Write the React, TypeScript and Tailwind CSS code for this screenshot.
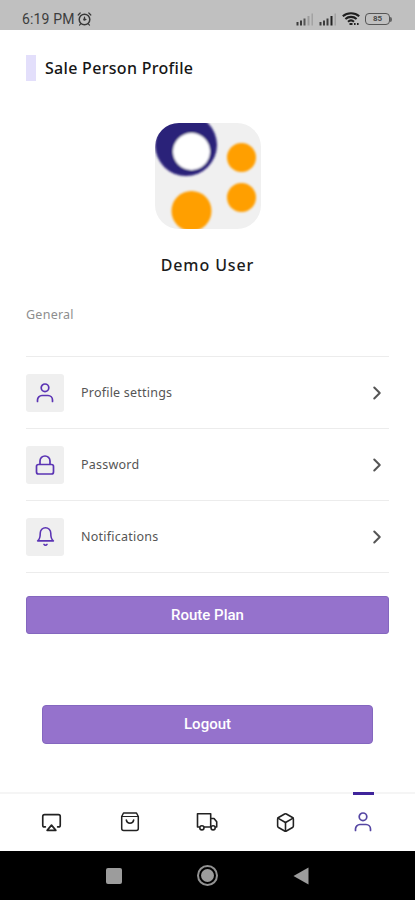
import { FiAirplay, FiBell, FiBox, FiChevronRight } from "react-icons/fi";

type IconProps = { className?: string };

function UserIcon({ className }: IconProps) {
  return (
    <svg width="22" height="22" viewBox="0 0 22 22" fill="none" stroke="currentColor" strokeWidth="1.7" strokeLinecap="round" className={className}>
      <circle cx="11" cy="5.800" r="3.800" />
      <path d="M3.500 19.500v-1.500a4.500 4.500 0 0 1 4.500-4.500h6a4.500 4.500 0 0 1 4.500 4.500v1.500" />
    </svg>
  );
}

function LockIcon({ className }: IconProps) {
  return (
    <svg width="22" height="22" viewBox="0 0 22 22" fill="none" stroke="currentColor" strokeWidth="1.7" className={className}>
      <rect x="2.500" y="10.500" width="17" height="9.500" rx="2" />
      <path d="M6 10.500V7a5 5 0 0 1 10 0v3.500" />
    </svg>
  );
}

function BellIcon({ className }: IconProps) {
  return <FiBell size={21} strokeWidth={1.8} className={className} />;
}

function BagIcon({ className }: IconProps) {
  return (
    <svg width="22" height="22" viewBox="0 0 22 22" fill="none" stroke="currentColor" strokeWidth="1.500" strokeLinecap="round" strokeLinejoin="round" className={className}>
      <path d="M4.500 2h13l1.800 3.500V17.500a2 2 0 0 1-2 2H4.700a2 2 0 0 1-2-2V5.500z" />
      <path d="M3 5.500h16" strokeWidth="1.200" />
      <path d="M7.300 9c.8 4.200 6.600 4.200 7.400 0" />
    </svg>
  );
}

function TruckIcon({ className }: IconProps) {
  return (
    <svg width="22" height="22" viewBox="0 0 22 22" fill="none" stroke="currentColor" strokeWidth="1.600" strokeLinejoin="round" className={className}>
      <path d="M3.800 16H1.500V2.800h13.200V16H8" />
      <path d="M14.700 7.500h3.300l2.700 3.300V16h-1.500" />
      <circle cx="5.900" cy="16.800" r="2.100" />
      <circle cx="17.100" cy="16.800" r="2.100" />
    </svg>
  );
}

function AirplayIcon({ className }: IconProps) {
  return <FiAirplay size={21} strokeWidth={1.9} className={className} />;
}

function BoxIcon({ className }: IconProps) {
  return <FiBox size={21} strokeWidth={1.8} className={className} />;
}

const settings = [
  { icon: UserIcon, name: "Profile settings", tracking: "tracking-[0.22px]" },
  { icon: LockIcon, name: "Password", tracking: "tracking-[0.22px]" },
  { icon: BellIcon, name: "Notifications", tracking: "tracking-[0.24px]" },
];

const tabs = [
  { icon: AirplayIcon, name: "Home" },
  { icon: BagIcon, name: "Orders" },
  { icon: TruckIcon, name: "Delivery" },
  { icon: BoxIcon, name: "Products" },
  { icon: UserIcon, name: "Profile", active: true },
];

function AlarmIcon() {
  return (
    <svg width="15" height="15" viewBox="0 0 15 15" fill="none" stroke="#383838" strokeWidth="1.5" strokeLinecap="round">
      <circle cx="7.5" cy="7.5" r="5.3" />
      <circle cx="7.5" cy="7.5" r="1.3" fill="#383838" stroke="none" />
      <path d="M7.5 5v2.5h1.5M1.2 3l2-2M13.8 3l-2-2M3.5 12.1l-1 1M11.5 12.1l1 1" strokeWidth="1.2" />
    </svg>
  );
}

function Signal({ full }: { full?: boolean }) {
  return (
    <svg width="18" height="13" viewBox="0 0 18 13" fill="#3c3c3c">
      <rect x="0.5" y="9" width="2" height="3.5" />
      <rect x="4" y="7.5" width="2" height="5" />
      <rect x="7.5" y="5.5" width="2" height="7" fill={full ? "#3c3c3c" : "#555"} />
      <rect x="11.5" y="3" width="2" height="9.5" fill={full ? "#222" : "#9b9b9b"} />
      <rect x="15.5" y="0.5" width="1.4" height="12" fill="#a0a0a0" />
    </svg>
  );
}

function WifiIcon() {
  return (
    <svg width="18" height="14" viewBox="0 0 18 14" fill="none" stroke="#1f1f1f" strokeWidth="2.1">
      <path d="M0.8 4.2C5.3 0.2 12.7 0.2 17.2 4.2" />
      <path d="M3.4 7C6.5 4.2 11.5 4.2 14.6 7" />
      <path d="M6 9.7C7.8 8.2 10.2 8.2 12 9.7" />
      <path d="M7.5 12h3M12 12h1.6M15 12h1.6" strokeWidth="2" />
    </svg>
  );
}

function Battery() {
  return (
    <div className="flex items-center">
      <div className="w-[25px] h-3 rounded-[4px] border border-[#555] flex items-center justify-center text-[8px] leading-none font-bold text-[#484848]">
        85
      </div>
      <div className="w-[2px] h-[5px] rounded-r-sm bg-[#666]"></div>
    </div>
  );
}

// App logo used as the default avatar
function Avatar() {
  return (
    <svg width="106" height="106" viewBox="0 0 106 106">
      <defs>
        <clipPath id="avatar">
          <rect width="106" height="106" rx="24" />
        </clipPath>
        <filter id="soft" x="-10%" y="-10%" width="120%" height="120%">
          <feGaussianBlur stdDeviation="1.3" />
        </filter>
      </defs>
      <g clipPath="url(#avatar)">
        <rect width="106" height="106" fill="#f0f0f0" />
        <g filter="url(#soft)">
          <circle cx="31" cy="22" r="31" fill="#2a2079" />
          <circle cx="36.5" cy="28.5" r="18.5" fill="#fff" />
          <circle cx="86.5" cy="34.5" r="14.5" fill="#ff9f05" />
          <circle cx="86.5" cy="74.5" r="14.5" fill="#ff9f05" />
          <circle cx="36.5" cy="88" r="20" fill="#ff9f05" />
        </g>
      </g>
    </svg>
  );
}

export default function App() {
  return (
    <main className="w-[415px] h-[900px] flex flex-col bg-white overflow-hidden font-['Noto_Sans',sans-serif]">
      <div className="h-[30px] shrink-0 bg-[#c0c0c0] flex justify-between pl-[22px] pr-[23px] pt-[9px] font-[Roboto,sans-serif]">
        <div className="flex h-5 items-center gap-[2px] text-[#3d3d3d]">
          <span className="text-[14px] leading-5 tracking-[0.15px]">6:19 PM</span>
          <AlarmIcon />
        </div>
        <div className="flex h-5 items-center gap-[5px]">
          <Signal />
          <Signal full />
          <WifiIcon />
          <Battery />
        </div>
      </div>

      <div className="flex-1 flex flex-col px-[26px] pt-[25px]">
        <div className="flex items-center gap-[9px] h-[26px]">
          <div className="w-[10px] h-[26px] bg-[#e3dffb]"></div>
          <h1 className="text-[16px] font-medium tracking-[0.3px] text-[#161616]">Sale Person Profile</h1>
        </div>

        <div className="flex flex-col items-center mt-[42px]">
          <Avatar />
          <h2 className="mt-6 h-6 leading-6 text-[16px] font-medium tracking-[0.9px] text-[#1c1c1c]">Demo User</h2>
        </div>

        <p className="mt-7 h-5 leading-5 text-[12.5px] tracking-[0.25px] text-[#8e8e8e]">General</p>

        <div className="mt-[31px] border-t border-[#ececec]">
          {settings.map((item) => (
            <div key={item.name} className="h-[72px] border-b border-[#ececec] flex items-center cursor-pointer">
              <div className="w-[38px] h-[38px] rounded-[3px] bg-[#efefef] flex items-center justify-center">
                <item.icon className="text-[#5b34b4]" />
              </div>
              <span className={`ml-[17px] pt-[2px] flex-1 text-[12.5px] text-[#555] ${item.tracking}`}>{item.name}</span>
              <FiChevronRight size={22} strokeWidth={2.2} className="mr-[1px] text-[#555]" />
            </div>
          ))}
        </div>

        <button className="mt-[23px] h-[38px] shrink-0 rounded-[3px] border border-[#8467bf] bg-[#9572cc] text-white text-[15px] font-medium font-[Roboto,sans-serif]">
          Route Plan
        </button>
        <button className="mt-[71px] mx-[16px] h-[39px] shrink-0 rounded-[4px] border border-[#8467bf] bg-[#9572cc] text-white text-[15px] font-medium font-[Roboto,sans-serif]">
          Logout
        </button>
      </div>

      <nav className="h-[59px] shrink-0 border-t-2 border-[#f5f5f5] px-[13px] pb-px grid grid-cols-5">
        {tabs.map((tab) => (
          <button key={tab.name} aria-label={tab.name} className="relative flex items-center justify-center">
            {tab.active && <span className="absolute -top-[2px] w-[21px] h-[3px] bg-[#3f249b]"></span>}
            <tab.icon className={tab.active ? "text-[#5546a3]" : "text-[#222]"} />
          </button>
        ))}
      </nav>

      <div className="h-[49px] shrink-0 bg-black px-[67px] grid grid-cols-3 items-center justify-items-center">
        <div className="w-4 h-4 rounded-[2px] bg-[#9c9c9c]"></div>
        <div className="w-[21px] h-[21px] rounded-full border-2 border-[#929292] flex items-center justify-center">
          <div className="w-[13px] h-[13px] rounded-full bg-[#9c9c9c]"></div>
        </div>
        <svg width="16" height="18" viewBox="0 0 16 18" fill="#9c9c9c">
          <path d="M0.5 9L15.500 0.5v17z" />
        </svg>
      </div>
    </main>
  );
}
